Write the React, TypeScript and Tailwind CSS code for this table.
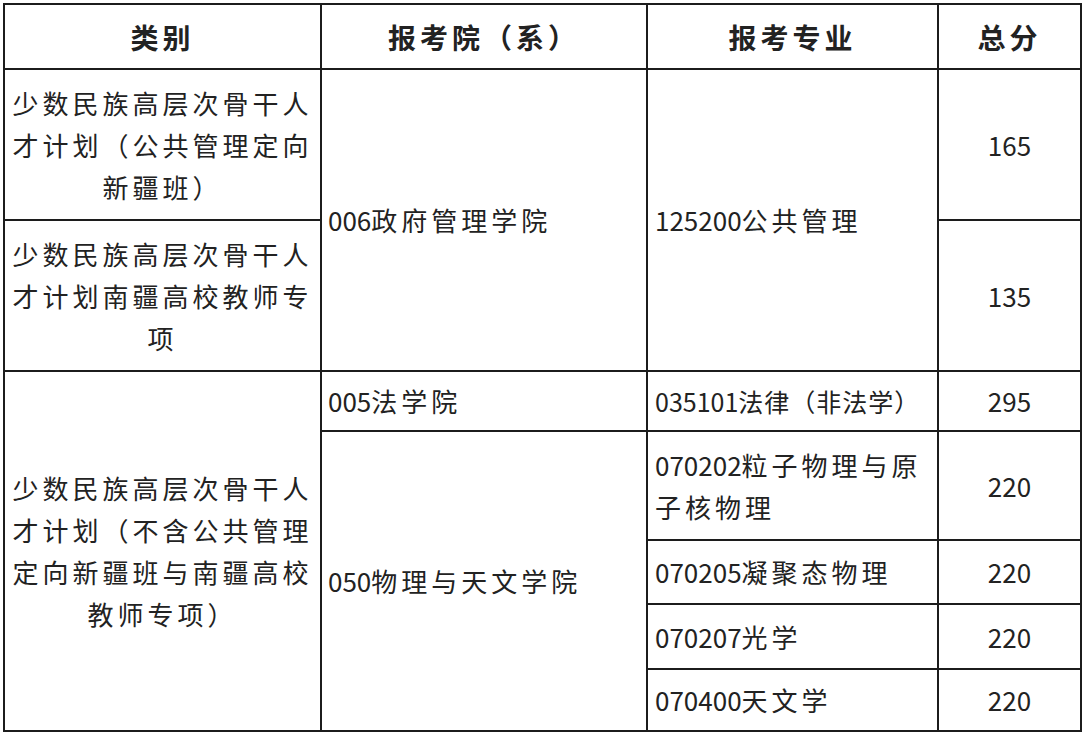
import React from "react";

const font = { fontFamily: '"Noto Sans CJK SC", "Noto Sans", sans-serif' };

// digits are set tight, the Chinese characters spaced out
function T({ text }: { text: string }) {
  return (
    <>
      {text.split(/(\d+)/).map((part, i) =>
        /^\d+$/.test(part) ? (
          <span key={i} className="tracking-normal">
            {part}
          </span>
        ) : (
          <span key={i}>{part}</span>
        )
      )}
    </>
  );
}

const base = "border-2 border-[#1c1c1c] align-middle leading-[42px] text-[#222]";
const cell = `${base} text-[26px] tracking-[4px]`;
const num = `${base} text-[26px] text-center`;
const head = "border-2 border-[#1c1c1c] align-middle text-center text-[28px] font-bold tracking-[4px] text-[#222]";

export default function App() {
  return (
    <div className="min-h-[733px] w-[1084px] bg-white pl-[3px] pt-[3px]" style={font}>
      <table className="w-[1077px] table-fixed border-collapse">
        <colgroup>
          <col className="w-[317px]" />
          <col className="w-[326px]" />
          <col className="w-[291px]" />
          <col className="w-[143px]" />
        </colgroup>
        <tbody>
          <tr className="h-[65px]">
            <th className={head}>类别</th>
            <th className={head}>报考院（系）</th>
            <th className={head}>报考专业</th>
            <th className={head}>总分</th>
          </tr>
          <tr className="h-[151px]">
            <td className={`${cell} px-[4px] text-center`}>少数民族高层次骨干人才计划（公共管理定向新疆班）</td>
            <td className={`${cell} pl-[6px]`} rowSpan={2}>
              <T text="006政府管理学院" />
            </td>
            <td className={`${cell} pl-[7px]`} rowSpan={2}>
              <T text="125200公共管理" />
            </td>
            <td className={num}>165</td>
          </tr>
          <tr className="h-[151px]">
            <td className={`${cell} px-[4px] text-center`}>少数民族高层次骨干人才计划南疆高校教师专项</td>
            <td className={num}>135</td>
          </tr>
          <tr className="h-[60px]">
            <td className={`${cell} px-[4px] text-center`} rowSpan={5}>
              少数民族高层次骨干人才计划（不含公共管理定向新疆班与南疆高校教师专项）
            </td>
            <td className={`${cell} pl-[6px]`}>
              <T text="005法学院" />
            </td>
            <td className={`${base} whitespace-nowrap pl-[7px] text-[25px] tracking-[1px]`}>
              <span className="tracking-normal">035101</span>法律（非法学）
            </td>
            <td className={num}>295</td>
          </tr>
          <tr className="h-[109px]">
            <td className={`${cell} pl-[6px]`} rowSpan={4}>
              <T text="050物理与天文学院" />
            </td>
            <td className={`${cell} pl-[7px]`}>
              <T text="070202粒子物理与原子核物理" />
            </td>
            <td className={num}>220</td>
          </tr>
          <tr className="h-[64px]">
            <td className={`${cell} pl-[7px]`}>
              <T text="070205凝聚态物理" />
            </td>
            <td className={num}>220</td>
          </tr>
          <tr className="h-[65px]">
            <td className={`${cell} pl-[7px]`}>
              <T text="070207光学" />
            </td>
            <td className={num}>220</td>
          </tr>
          <tr className="h-[62px]">
            <td className={`${cell} pl-[7px]`}>
              <T text="070400天文学" />
            </td>
            <td className={num}>220</td>
          </tr>
        </tbody>
      </table>
    </div>
  );
}
